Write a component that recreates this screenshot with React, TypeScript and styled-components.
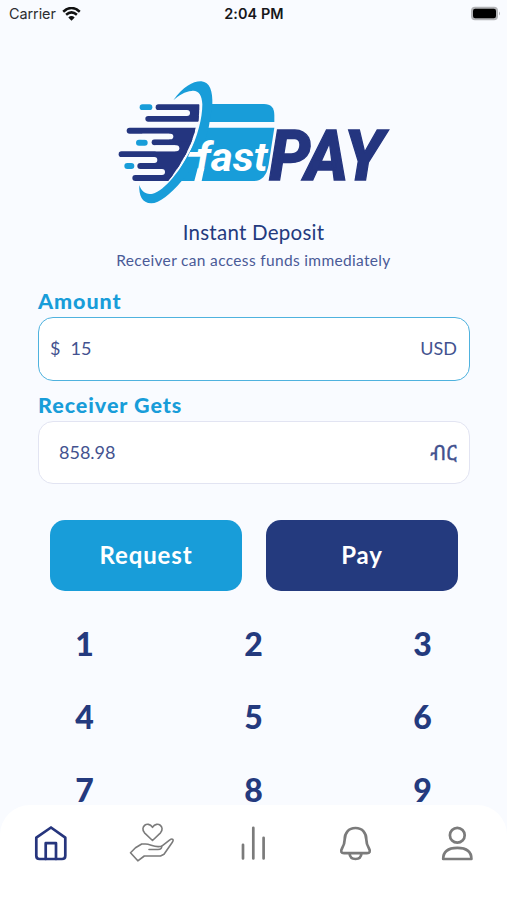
import React from "react";
import styled, { createGlobalStyle } from "styled-components";

const NAVY = "#243a7e";
const CYAN = "#189dd9";
const PAGE = "#f9fbff";
const GREY = "#7b7b7b";

const GlobalStyle = createGlobalStyle`
  * { box-sizing: border-box; }
  body { margin: 0; background: ${PAGE}; }
`;

const Screen = styled.div`
  width: 507px;
  height: 900px;
  display: flex;
  flex-direction: column;
  overflow: hidden;
  background: ${PAGE};
  color: ${NAVY};
  font-family: Lato, sans-serif;
`;

const StatusBar = styled.header`
  height: 28px;
  padding: 0 6px 0 9px;
  display: grid;
  grid-template-columns: 1fr auto 1fr;
  align-items: center;
  font: 400 14.4px/28px Inter, sans-serif;
  color: #2c2d30;
`;

const Carrier = styled.div`
  display: flex;
  align-items: center;
  gap: 6px;
  letter-spacing: -0.05px;
`;

const Clock = styled.div`
  font-weight: 600;
  padding-right: 2px;
  letter-spacing: 0.1px;
  color: #16171a;
`;

const BatteryIcon = styled.svg`
  justify-self: end;
  display: block;
  margin-top: -2px;
`;

const Logo = styled.svg`
  display: block;
  flex: none;
  margin: 47px 0 0 110px;
`;

const Intro = styled.div`
  display: flex;
  flex-direction: column;
  align-items: center;
  margin-top: 8px;
`;

const Title = styled.h1`
  margin: 0;
  font-size: 20.5px;
  font-weight: 400;
  line-height: 28px;
  letter-spacing: 0.25px;
`;

const Subtitle = styled.p`
  margin: 1px 0 0;
  font-size: 15.5px;
  line-height: 26px;
  letter-spacing: 0.33px;
  color: #4a5a97;
`;

const Form = styled.div`
  display: flex;
  flex-direction: column;
  margin: 14px 37px 0 38px;
`;

const Label = styled.label`
  height: 30px;
  font-size: 21.5px;
  font-weight: 900;
  line-height: 28px;
  letter-spacing: 0.95px;
  color: ${CYAN};
`;

const Field = styled.div<{ $active?: boolean }>`
  height: ${(p) => (p.$active ? 64 : 63)}px;
  margin-bottom: ${(p) => (p.$active ? 10 : 1)}px;
  padding: 0 12px 2px 11px;
  display: flex;
  align-items: center;
  justify-content: space-between;
  border: 1.5px solid ${(p) => (p.$active ? "#4fb2de" : "#e2e4f2")};
  border-radius: 15px;
  background: #fff;
  font-size: 18px;
  color: #43528f;
`;

const Value = styled.span<{ $indent?: boolean }>`
  display: flex;
  gap: 10px;
  padding-left: ${(p) => (p.$indent ? 9 : 0)}px;
`;

const Birr = styled.span`
  font-family: "Noto Sans Ethiopic", "Noto Sans", sans-serif;
  font-size: 21.5px;
  line-height: 24px;
  -webkit-text-stroke: 0.3px currentColor;
`;

const Actions = styled.div`
  display: grid;
  grid-template-columns: 1fr 1fr;
  gap: 24px;
  margin: 35px 49px 0 50px;
`;

const Action = styled.button<{ $fill: string }>`
  height: 71px;
  padding: 0 0 2px;
  border: 0;
  border-radius: 15px;
  background: ${(p) => p.$fill};
  color: #fff;
  font: 700 24px Lato, sans-serif;
  letter-spacing: 0.9px;
`;

const Keypad = styled.div`
  flex: 1;
  min-height: 0;
  display: grid;
  grid-template-columns: repeat(3, 169px);
  grid-auto-rows: 73.2px;
  margin-top: 16px;
`;

const Key = styled.button`
  border: 0;
  padding: 0;
  background: none;
  color: ${NAVY};
  font: 900 32px Lato, sans-serif;
`;

const TabBar = styled.nav`
  flex: none;
  height: 95px;
  padding-top: 12px;
  display: grid;
  grid-template-columns: repeat(5, 1fr);
  align-items: start;
  justify-items: center;
  border-radius: 30px 30px 0 0;
  background: #fff;
`;

const TabIcon = styled.svg<{ $active?: boolean; $thin?: boolean }>`
  display: block;
  overflow: visible;
  fill: none;
  stroke: ${(p) => (p.$active ? "#26357d" : GREY)};
  stroke-width: ${(p) => (p.$thin ? 1.6 : 2.7)};
  stroke-linecap: round;
  stroke-linejoin: round;
`;

function FastPayLogo() {
  return (
    <Logo width="290" height="135" viewBox="0 0 870 405" aria-label="fastPAY">
      <defs>
        <clipPath id="speed">
          <path d="M0 80H268Q269 112 265 140L257 158Q242 230 175 318H0Z" />
        </clipPath>
      </defs>
      <g fill={CYAN}>
        <path d="M290 87H462Q493 87 493 120V141H290Z" />
        <path d="M280 158H493L476 268Q468 318 432 318H190Z" />
        <path d="M190 76C220 34 250 18 274 19C299 21 309 48 307 90L296 158C281 220 255 275 215 318C180 359 148 385 124 385C96 385 86 360 88 330C94 350 108 360 128 356C165 347 210 285 237 237C263 184 277 130 277 88C276 60 265 45 245 48C225 50 207 60 190 76Z" />
        <rect x="89" y="88" width="38" height="17" rx="8.5" />
        <rect x="78" y="194" width="35" height="18" rx="9" />
        <rect x="43" y="264" width="30" height="18" rx="9" />
      </g>
      <g clipPath="url(#speed)">
        <g fill="#24357f">
          <rect x="137" y="88" width="180" height="17" rx="8.5" />
          <rect x="106" y="123" width="200" height="17" rx="8.5" />
          <rect x="228" y="90" width="50" height="48" />
          <rect x="50" y="158" width="240" height="18" rx="9" />
          <rect x="125" y="193" width="160" height="18" rx="9" />
          <rect x="26" y="229" width="240" height="17" rx="8.5" />
          <rect x="82" y="264" width="160" height="18" rx="9" />
          <rect x="67" y="300" width="180" height="18" rx="9" />
          <rect x="178" y="165" width="100" height="40" />
          <rect x="196" y="200" width="90" height="40" />
          <rect x="130" y="235" width="120" height="40" />
          <rect x="153" y="270" width="90" height="40" />
        </g>
        <g fill={PAGE}>
          <rect x="130" y="105" width="110" height="18" rx="9" />
          <rect x="90" y="176" width="100" height="17" rx="8.5" />
          <rect x="130" y="211" width="78" height="18" rx="9" />
          <rect x="60" y="246" width="82" height="18" rx="9" />
          <rect x="90" y="282" width="75" height="18" rx="9" />
        </g>
      </g>
      <path d="M240 231H280L277 245H234ZM263 280H283L275 318H253Z" fill="#fff" />
      <text x="258" y="288" textLength="215" lengthAdjust="spacingAndGlyphs" fill="#fff" fontFamily="Roboto" fontSize="121" fontWeight="700" fontStyle="italic">fast</text>
      <text x="477" y="315" textLength="344" lengthAdjust="spacingAndGlyphs" fill="#24357f" stroke="#24357f" strokeWidth="4" fontFamily="Roboto" fontSize="208" fontWeight="800" fontStyle="italic">PAY</text>
    </Logo>
  );
}

export default function App() {
  return (
    <Screen>
      <GlobalStyle />
      <StatusBar>
        <Carrier>
          Carrier
          <svg width="19" height="15" viewBox="0 0 19 15" fill="none" stroke="#111" strokeWidth="2.5">
            <path d="M1.2 4.7Q9.5 -2.7 17.8 4.7M4.1 7.8Q9.5 3 14.9 7.8" />
            <path d="M6.3 10.5Q9.5 7.6 12.7 10.5L9.5 13.7Z" fill="#111" stroke="none" />
          </svg>
        </Carrier>
        <Clock>2:04 PM</Clock>
        <BatteryIcon width="31" height="15" viewBox="0 0 31 15">
          <rect x="1" y="0.8" width="27" height="13.4" rx="4" fill="#b2b3b6" />
          <path d="M29 5.5Q31 7.5 29 9.5Z" fill="#b2b3b6" />
          <rect x="3" y="2.8" width="23" height="9.4" rx="2.2" fill="#000" />
        </BatteryIcon>
      </StatusBar>
      <FastPayLogo />
      <Intro>
        <Title>Instant Deposit</Title>
        <Subtitle>Receiver can access funds immediately</Subtitle>
      </Intro>
      <Form>
        <Label>Amount</Label>
        <Field $active>
          <Value><span>$</span><span>15</span></Value>
          <span>USD</span>
        </Field>
        <Label>Receiver Gets</Label>
        <Field>
          <Value $indent>858.98</Value>
          <Birr>ብር</Birr>
        </Field>
      </Form>
      <Actions>
        <Action $fill={CYAN}>Request</Action>
        <Action $fill={NAVY}>Pay</Action>
      </Actions>
      <Keypad>
        {[1, 2, 3, 4, 5, 6, 7, 8, 9].map((n) => (
          <Key key={n}>{n}</Key>
        ))}
      </Keypad>
      <TabBar>
        <TabIcon $active width="50" height="50" viewBox="1 0 50 50">
          <path d="M11.3 20.7L26 10.5L40.3 20.7V38.7Q40.3 42 37 42H14.6Q11.3 42 11.3 38.7Z" />
          <path d="M20.7 42V26.2H31V42" />
        </TabIcon>
        <TabIcon $thin width="50" height="50" viewBox="0 0 50 50">
          <path d="M25.5 23.5L17.5 15.8C12.5 10 20.5 3.3 25.5 10.3C30.5 3.3 38.5 10 33.5 15.8Z" />
          <path d="M3.5 35.7L10.8 43.8L17.3 39H33.5L37 37.2L45 25.8C47.5 22.2 45.3 21 42.5 23.2L34.5 29.3L31.5 29.6C26 29.8 23 27 18.5 27H14.7L8.5 30.8Z" />
          <path d="M22 32.5H31C34 32.5 35 31 34.5 29.3" />
        </TabIcon>
        <TabIcon width="50" height="50" viewBox="0 0 50 50">
          <path d="M15 27.8V41.5M25.3 10.8V41.5M35.6 20.8V41.5" />
        </TabIcon>
        <TabIcon width="50" height="50" viewBox="-0.5 0 50 50">
          <path d="M25 11C18 11 14.2 16 14.2 22.5C14.2 27 13 29 11.5 31.5C9.8 34.5 10.8 36.2 13.5 36.2H36.5C39.2 36.2 40.2 34.5 38.5 31.5C37 29 35.8 27 35.8 22.5C35.8 16 32 11 25 11ZM19 36.5Q19.5 42 25 42Q30.5 42 31 36.5" />
        </TabIcon>
        <TabIcon width="50" height="50" viewBox="-1 0 50 50">
          <circle cx="25.3" cy="18.2" r="7.4" />
          <path d="M11.2 42C11.2 33.5 17 30.8 25.3 30.8S39.4 33.5 39.4 42Z" />
        </TabIcon>
      </TabBar>
    </Screen>
  );
}
